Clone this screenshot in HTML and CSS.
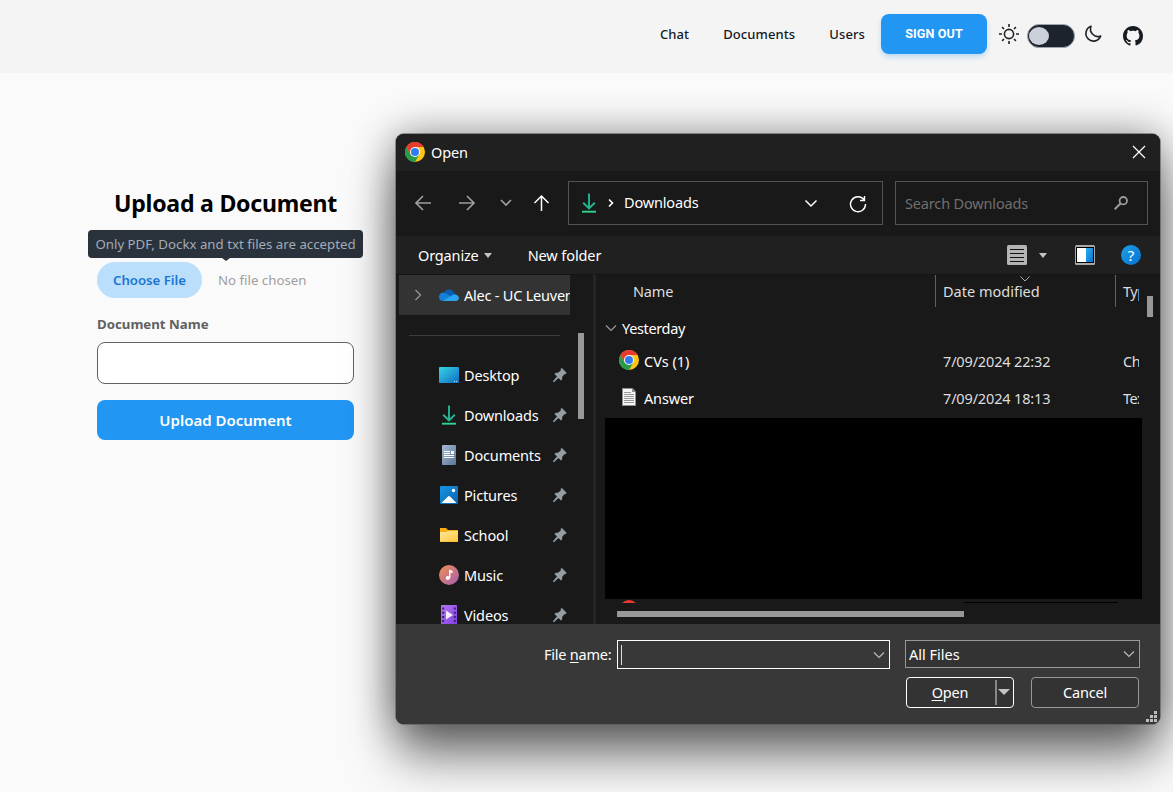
FILE: index.html
```html
<!DOCTYPE html>
<html lang="en">
<head>
<meta charset="utf-8">
<title>Upload a Document</title>
<link rel="stylesheet" href="styles.css">
</head>
<body>
<svg class="defs" aria-hidden="true">
  <defs>
    <linearGradient id="desk" x1="0" y1="0" x2="1" y2="1"><stop offset="0" stop-color="#36d6e4"/><stop offset="1" stop-color="#0f6cc4"/></linearGradient>
    <linearGradient id="doc" x1="0" y1="0" x2="1" y2="1"><stop offset="0" stop-color="#a6b8d0"/><stop offset="1" stop-color="#5b7898"/></linearGradient>
    <linearGradient id="pic" x1="0" y1="0" x2="1" y2="1"><stop offset="0" stop-color="#1796e0"/><stop offset="1" stop-color="#0a62b4"/></linearGradient>
    <linearGradient id="fold" x1="0" y1="0" x2="1" y2="1"><stop offset="0" stop-color="#ffe69c"/><stop offset="1" stop-color="#ffc83c"/></linearGradient>
    <linearGradient id="mus" x1="0" y1="0" x2="1" y2="1"><stop offset="0" stop-color="#f3904f"/><stop offset="1" stop-color="#a45cb4"/></linearGradient>
    <linearGradient id="vid" x1="0" y1="0" x2="1" y2="1"><stop offset="0" stop-color="#b678f0"/><stop offset="1" stop-color="#7d3fe0"/></linearGradient>
    <linearGradient id="blue" x1="0" y1="0" x2="1" y2="1"><stop offset="0" stop-color="#2cb0ee"/><stop offset="1" stop-color="#0674d0"/></linearGradient>
  </defs>
  <symbol id="chrome" viewBox="0 0 20 20">
    <circle cx="10" cy="10" r="10" fill="#ffc519"/>
    <path d="M10 10 5.7 12.5 1.34 5A10 10 0 0 0 10 20l4.3-7.5z" fill="#279a4b"/>
    <path d="M10 5h8.66A10 10 0 0 0 1.34 5L5.7 12.5 10 10z" fill="#e63b2e"/>
    <circle cx="10" cy="10" r="5" fill="#fff"/><circle cx="10" cy="10" r="4" fill="#2f7bf0"/>
  </symbol>
  <symbol id="pin" viewBox="0 0 14 14"><path d="M7.800.8 8.900.1 13.500 4.700 12.900 6l-1.500.3-2.100 2.500-.3 3L7.900 12.500 5.500 10.100 1.200 14 .1 14 .1 12.900 4 8.600 1.500 6.100 2.300 5l3.100-.4 2.300-2z" fill="#929da5"/></symbol>
  <symbol id="down" viewBox="0 0 16 20"><path d="M8 .5V15M2.200 9.800 8 15.500l5.800-5.700" fill="none" stroke="#22b795" stroke-width="1.900"/><path d="M1 18.700h14" stroke="#2fd58e" stroke-width="1.900"/></symbol>
  <symbol id="chev" viewBox="0 0 12 12"><path d="M1 3.500 6 8.500l5-5" fill="none" stroke="currentColor" stroke-width="1.200"/></symbol>
</svg>

<header class="topbar">
  <nav class="links"><a>Chat</a><a>Documents</a><a>Users</a></nav>
  <button class="signout">SIGN OUT</button>
  <svg class="sun" width="20" height="20" viewBox="0 0 20 20" fill="none" stroke="#1f2329" stroke-width="1.600"><circle cx="10" cy="10" r="4.600"/><path d="M10 0v3M10 17v3M0 10h3M17 10h3M3.100 3.100l1.900 1.900M15 15l1.900 1.900M3.100 16.900 5 15M15 5l1.900-1.900"/></svg>
  <span class="toggle"><span class="knob"></span></span>
  <svg class="moon" width="18" height="18" viewBox="0 0 18 18" fill="none" stroke="#1f2329" stroke-width="1.600"><path d="M7 1.300A7.600 7.600 0 1 0 16.700 11 7.500 7.500 0 0 1 7 1.300z" stroke-linejoin="round"/></svg>
  <svg class="github" width="20" height="20" viewBox="0 0 16 16" fill="#161b22"><path d="M8 0C3.580 0 0 3.580 0 8c0 3.540 2.290 6.530 5.470 7.590.4.070.55-.17.55-.38 0-.19-.01-.82-.01-1.490-2.010.37-2.530-.49-2.690-.94-.09-.23-.48-.94-.82-1.130-.28-.15-.68-.52-.01-.53.63-.01 1.080.58 1.230.82.72 1.210 1.870.87 2.330.66.070-.52.28-.87.51-1.070-1.780-.2-3.640-.89-3.640-3.950 0-.87.31-1.590.82-2.150-.08-.2-.36-1.020.08-2.120 0 0 .67-.21 2.200.82.640-.18 1.320-.27 2-.27s1.360.09 2 .27c1.530-1.040 2.200-.82 2.200-.82.44 1.100.16 1.920.08 2.120.51.56.82 1.270.82 2.150 0 3.070-1.870 3.750-3.650 3.950.29.25.54.73.54 1.480 0 1.070-.01 1.930-.01 2.200 0 .21.15.46.55.38A8.010 8.010 0 0 0 16 8c0-4.420-3.580-8-8-8z"/></svg>
</header>

<main class="upload">
  <h1>Upload a Document</h1>
  <div class="picker">
    <div class="tip">Only PDF, Dockx and txt files are accepted</div>
    <span class="choose">Choose File</span><span class="nofile">No file chosen</span>
  </div>
  <label class="label">Document Name</label>
  <div class="field"></div>
  <button class="submit">Upload Document</button>
</main>

<section class="dialog">
  <div class="titlebar">
    <svg width="20" height="20"><use href="#chrome"/></svg><span class="title">Open</span>
    <svg class="close" width="14" height="14" viewBox="0 0 14 14"><path d="M1 1l12 12M13 1 1 13" stroke="#fff" stroke-width="1.200"/></svg>
  </div>
  <div class="navbar">
    <div class="arrows">
      <svg width="18" height="18" viewBox="0 0 18 18" fill="none" stroke="#9d9d9d" stroke-width="1.700"><path d="M17 9H2M9 2 2 9l7 7"/></svg>
      <svg width="18" height="18" viewBox="0 0 18 18" fill="none" stroke="#9d9d9d" stroke-width="1.700"><path d="M1 9h15M9 2l7 7-7 7"/></svg>
      <svg width="14" height="14" viewBox="0 0 14 14" fill="none" stroke="#9d9d9d" stroke-width="1.700"><path d="M2 4 7 9l5-5"/></svg>
      <svg width="18" height="18" viewBox="0 0 18 18" fill="none" stroke="#fff" stroke-width="1.500"><path d="M8.500 17V2M1.500 9l7-7 7 7"/></svg>
    </div>
    <div class="path">
      <svg width="16" height="20"><use href="#down"/></svg>
      <svg class="crumb" width="6" height="10" viewBox="0 0 6 10"><path d="M1 1.500 4.500 5 1 8.500" fill="none" stroke="#fff" stroke-width="1.600"/></svg>
      <span>Downloads</span>
      <svg class="pathchev" width="14" height="14" viewBox="0 0 14 14"><path d="M1.500 4.500 7 10l5.500-5.500" fill="none" stroke="#fff" stroke-width="1.500"/></svg>
      <svg class="reload" width="18" height="18" viewBox="0 0 18 18" fill="none" stroke="#fff" stroke-width="1.400"><path d="M15.200 5A7.500 7.500 0 1 0 16.500 9M15.500 1v4.500H11"/></svg>
    </div>
    <div class="search"><span>Search Downloads</span>
      <svg width="14" height="14" viewBox="0 0 14 14" fill="none" stroke="#9b9b9b"><circle cx="9.300" cy="4.700" r="3.700" stroke-width="1.800"/><path d="M6.500 7.500.7 13.300" stroke-width="2"/></svg>
    </div>
  </div>
  <div class="toolbar">
    <span>Organize</span><i class="caret c1"></i><span class="newf">New folder</span>
    <div class="tools">
      <svg width="20" height="20" viewBox="0 0 20 20"><rect width="20" height="20" rx="1.500" fill="#b4b4b4"/><path d="M3 4.500h14M3 8.500h14M3 12.500h14M3 16.500h14" stroke="#111"/></svg>
      <i class="caret c2"></i>
      <svg class="pane" width="20" height="20" viewBox="0 0 20 20"><rect width="20" height="20" rx="1.500" fill="#aaa"/><path d="M1 2h18v16H1z" fill="#000"/><path d="M2 3h9v14H2z" fill="#fff"/><path d="M11 3h7v14h-7z" fill="url(#blue)"/></svg>
      <span class="help">?</span>
    </div>
  </div>
  <div class="body">
    <aside class="side">
      <div class="tree">
        <div class="account"><svg class="rchev" width="12" height="12"><use href="#chev"/></svg>
          <svg width="20" height="14" viewBox="0 0 20 14"><path d="M5 5A5.500 5.500 0 0 1 15 4.500 5 5 0 0 1 16 12H4A4 4 0 0 1 5 5z" fill="#0a5fb4"/><path d="M0 9a4.300 4.300 0 0 1 6-4l9 5-4 3H4a4 4 0 0 1-4-4z" fill="#1580d8"/><path d="M4 13 13.500 7A4.600 4.600 0 0 1 20 9.500 3.700 3.700 0 0 1 16 13z" fill="#29a5ef"/></svg>
          <span>Alec - UC Leuven</span></div>
        <div class="rule"></div>
        <div class="item"><b class="ico"><svg width="20" height="16" viewBox="0 0 20 16"><rect width="20" height="16" rx="1" fill="url(#desk)"/><path d="M15 14.500h1M17 14.500h1" stroke="#cfe8ff"/></svg></b><span>Desktop</span><svg class="pin"><use href="#pin"/></svg></div>
        <div class="item"><b class="ico"><svg width="16" height="20"><use href="#down"/></svg></b><span>Downloads</span><svg class="pin"><use href="#pin"/></svg></div>
        <div class="item"><b class="ico"><svg width="14" height="20" viewBox="0 0 14 20"><rect width="14" height="20" rx="1" fill="url(#doc)"/><path d="M2 6.500h6M2 8.500h6M2 10.500h10M2 12.500h10" stroke="#fff"/><path d="M9 6h3v3H9z" fill="#fff"/></svg></b><span>Documents</span><svg class="pin"><use href="#pin"/></svg></div>
        <div class="item"><b class="ico"><svg width="18" height="18" viewBox="0 0 18 18"><rect width="18" height="18" rx="1" fill="url(#pic)"/><path d="m1.500 17 6.500-6.500q1-1 2 0l6.500 6.500z" fill="#fff"/><circle cx="13.500" cy="4.500" r="1.700" fill="#fff"/></svg></b><span>Pictures</span><svg class="pin"><use href="#pin"/></svg></div>
        <div class="item"><b class="ico"><svg width="18" height="14" viewBox="0 0 18 14"><path d="M0 0h6l2 2h10v12H0z" fill="#f5ae14"/><path d="M0 4h6l2-1h10v10.500H0z" fill="url(#fold)"/></svg></b><span>School</span><svg class="pin"><use href="#pin"/></svg></div>
        <div class="item"><b class="ico"><svg width="20" height="20" viewBox="0 0 20 20"><circle cx="10" cy="10" r="10" fill="url(#mus)"/><circle cx="8.800" cy="13" r="2.100" fill="#fff"/><path d="M10 13V4.800l3.500 1v2.400L11.400 7.600V13z" fill="#fff"/></svg></b><span>Music</span><svg class="pin"><use href="#pin"/></svg></div>
        <div class="item"><b class="ico"><svg width="16" height="20" viewBox="0 0 16 20"><rect width="16" height="20" rx="1" fill="url(#vid)"/><path d="M2.200 2.500v16M13.800 2.500v16" stroke="#3b1f78" stroke-width="2" stroke-dasharray="2 2.200"/><path d="m5 5.500 7 4.500-7 4.500z" fill="#f2eefa"/></svg></b><span>Videos</span><svg class="pin"><use href="#pin"/></svg></div>
      </div>
      <div class="vbar"></div>
    </aside>
    <div class="files">
      <div class="list">
        <div class="row head"><span class="c-name">Name</span><span class="c-date">Date modified<svg class="sort" width="10" height="6" viewBox="0 0 10 6"><path d="M.5.500 5 5 9.500.500" fill="none" stroke="#aaa"/></svg></span><span class="c-type">Type</span></div>
        <div class="group"><svg width="12" height="12"><use href="#chev"/></svg><span>Yesterday</span></div>
        <div class="row r1"><span class="c-name"><b class="ico"><svg width="20" height="20"><use href="#chrome"/></svg></b>CVs (1)</span><span class="c-date">7/09/2024 22:32</span><span class="c-type">Chrome</span></div>
        <div class="row r2"><span class="c-name"><b class="ico"><svg width="14" height="18" viewBox="0 0 14 18"><path d="M0 0h10.500L14 3.500V18H0z" fill="#8e8e8e"/><path d="M1 1h9v3h3v13H1z" fill="#f6f6f6"/><path d="M2 4.500h7M2 6.500h10M2 8.500h10M2 10.500h10M2 12.500h10M2 14.500h10" stroke="#999"/></svg></b>Answer</span><span class="c-date">7/09/2024 18:13</span><span class="c-type">Text</span></div>
      </div>
      <div class="redacted"></div>
      <div class="peek"><svg width="14" height="3" viewBox="0 0 14 3"><path d="M0 3Q7-3 14 3z" fill="#e63b2e"/></svg><i></i></div>
      <div class="hbar"></div>
      <div class="vthumb"></div>
    </div>
  </div>
  <footer class="foot">
    <div class="line1"><span class="fname">File <u>n</u>ame:</span>
      <div class="combo"><i class="cursor"></i><svg width="12" height="12"><use href="#chev"/></svg></div>
      <div class="select"><span>All Files</span><svg width="12" height="12"><use href="#chev"/></svg></div></div>
    <div class="line2"><div class="btn open"><span><u>O</u>pen</span><em><i class="caret big"></i></em></div><div class="btn">Cancel</div></div>
    <svg class="grip" width="11" height="11" viewBox="0 0 11 11" fill="#bdbdbd"><path d="M8 0h3v3H8zM4 4h3v3H4zM8 4h3v3H8zM0 8h3v3H0zM4 8h3v3H4zM8 8h3v3H8z"/></svg>
  </footer>
</section>
</body>
</html>
```
FILE: styles.css
```css
* { box-sizing: border-box; }
html, body { margin: 0; height: 792px; overflow: hidden; }
body { background: #fafafa; font-family: "Noto Sans", "Open Sans", sans-serif; position: relative; }
svg { display: block; flex: none; }
.defs { position: absolute; width: 0; height: 0; }
button { border: 0; padding: 0; }

.topbar { height: 73px; background: #f4f4f4; display: flex; justify-content: flex-end; padding: 14px 30px 0 0; }
.links { display: flex; gap: 34px; padding-right: 16px; height: 40px; align-items: center; font-size: 13px; font-weight: 500; color: #15181e; letter-spacing: .1px; white-space: nowrap; }
.signout { width: 106px; height: 40px; border-radius: 8px; background: #2196f3; color: #fff; font: bold 12.600px Roboto, sans-serif; letter-spacing: .1px; padding-bottom: 1px; box-shadow: 0 4px 6px -1px rgba(33, 150, 243, .2), 0 2px 4px rgba(33, 150, 243, .1); }
.sun { margin: 10px 0 0 12px; }
.toggle { width: 48px; height: 24px; margin: 10px 0 0 8px; border-radius: 12px; background: #1d232a; border: 1px solid #9ca3af; padding: 2px 1px; }
.knob { display: block; width: 20px; height: 18px; border-radius: 50%; background: #ccd0da; }
.moon { margin: 11px 0 0 9px; }
.github { margin: 12px 0 0 21px; }

.upload { width: 257px; margin: 113px 0 0 97px; display: flex; flex-direction: column; }
h1 { margin: 0; height: 36px; line-height: 35px; font-size: 23.100px; font-weight: 700; letter-spacing: -.25px; text-align: center; white-space: nowrap; color: #000; }
.picker { position: relative; margin-top: 40px; height: 36px; display: flex; align-items: center; }
.tip { position: absolute; left: -9px; top: -32px; width: 275px; height: 28px; border-radius: 4px; background: #2a323c; color: #a3abb8; font-size: 13.250px; line-height: 28px; text-align: center; white-space: nowrap; }
.tip::after { content: ""; position: absolute; left: 134px; top: 28px; border: 4px solid transparent; border-top: 3px solid #2a323c; border-bottom: 0; }
.choose { width: 105px; height: 36px; border-radius: 18px; background: #bbdefb; color: #1976d2; font-size: 13.200px; font-weight: 600; line-height: 36px; text-align: center; }
.nofile { margin-left: 16px; color: #9e9e9e; font-size: 13.250px; }
.label { margin-top: 16px; height: 20px; line-height: 20px; font-size: 13.250px; font-weight: 700; color: #616161; }
.field { margin-top: 8px; height: 42px; border: 1px solid #616161; border-radius: 8px; background: #fff; }
.submit { margin-top: 16px; height: 40px; border-radius: 8px; background: #2196f3; color: #fff; font: 600 15px "Noto Sans", sans-serif; }

.dialog { position: absolute; left: 396px; top: 134px; width: 764px; height: 590px; border-radius: 8px; background: #191919; color: #fff; font-size: 14.500px; letter-spacing: -.16px; white-space: nowrap; box-shadow: 0 0 0 1px rgba(90, 90, 90, .6), 0 0 40px rgba(0, 0, 0, .42), 0 34px 50px -2px rgba(0, 0, 0, .52); }
.titlebar { height: 37px; background: #202020; border-radius: 8px 8px 0 0; display: flex; align-items: center; padding: 0 14px 1px 9px; }
.title { margin-left: 6px; }
.close { margin-left: auto; }
.navbar { height: 65px; display: flex; padding: 10px 12px 0 18px; }
.arrows { width: 154px; height: 44px; display: grid; grid-template-columns: 44px 41px 34px 35px; align-items: center; }
.path { width: 315px; height: 44px; border: 1px solid #535353; display: flex; align-items: center; padding: 0 15px 0 12px; }
.path span { padding-bottom: 2px; }
.crumb { margin: 0 10px 0 11px; }
.pathchev { margin-left: auto; }
.reload { margin: 2px 0 0 31px; }
.search { width: 253px; height: 44px; margin-left: 12px; border: 1px solid #535353; display: flex; align-items: center; justify-content: space-between; padding: 0 19px 0 9px; color: #6f6f6f; }
.toolbar { height: 38px; background: #202020; display: flex; align-items: center; padding: 0 19px 0 22px; }
.caret { width: 0; height: 0; border: 4px solid transparent; border-top: 5px solid #c4c4c4; border-bottom: 0; }
.c1 { margin-left: 5px; }
.newf { margin-left: 36px; letter-spacing: -.1px; }
.tools { margin-left: auto; display: flex; align-items: center; }
.c2 { margin-left: 12px; }
.pane { margin-left: 28px; }
.help { margin-left: 26px; width: 20px; height: 20px; border-radius: 50%; background: linear-gradient(135deg, #1ea0e8, #0672d2); font-size: 15px; line-height: 20px; text-align: center; }

.body { height: 350px; display: flex; }
.side { width: 197px; display: flex; border-top: 1px solid #141414; }
.tree { width: 174px; padding-left: 3px; height: 349px; overflow: hidden; }
.account { height: 40px; background: #333; display: flex; align-items: center; padding-left: 13px; overflow: hidden; }
.account span { margin-left: 5px; letter-spacing: -.22px; }
.rchev { transform: rotate(-90deg); margin-right: 15px; color: #999; }
.rule { height: 1px; margin: 20px 10px 19px; background: #3c3c3c; }
.item { height: 40px; display: flex; align-items: center; padding: 0 3px 0 40px; }
.ico { width: 20px; height: 20px; display: flex; justify-content: center; align-items: center; margin-right: 5px; flex: none; }
.pin { width: 14px; height: 14px; margin-left: auto; }
.vbar { width: 6px; height: 86px; margin: 58px 0 0 8px; background: #989898; }
.files { flex: 1; border-left: 3px solid #252525; position: relative; border-top: 1px solid #141414; }
.list { width: 543px; height: 143px; overflow: hidden; }
.row { display: grid; grid-template-columns: 339px 180px 60px; height: 37px; align-items: center; color: #dedede; }
.row > span { height: 100%; display: flex; align-items: center; }
.head { height: 32px; }
.head .c-name { padding-left: 37px; }
.head .c-date, .head .c-type { border-left: 1px solid #616161; position: relative; padding-left: 7px; }
.head .c-date { letter-spacing: 0; }
.c-name { padding-left: 23px; }
.c-date, .c-type { padding-left: 8px; }
.c-type { letter-spacing: -.5px; }
.r1 .c-name, .r2 .c-name { color: #fff; }
.r1 .c-name { letter-spacing: 0; }
.row .ico { margin-top: -1px; }
.sort { position: absolute; left: 84px; top: 1px; }
.group { height: 35px; display: flex; align-items: center; padding: 6px 0 0 9px; gap: 5px; letter-spacing: -.35px; }
.group svg { color: #9a9a9a; }
.redacted { margin-left: 9px; width: 537px; height: 181px; background: #000; }
.peek { height: 5px; display: flex; padding: 0 0 1px 26px; align-items: flex-end; }
.peek i { width: 154px; height: 1px; margin-left: 328px; background: #000; }
.hbar { width: 347px; height: 6px; margin: 7px 0 0 21px; background: #989898; }
.vthumb { position: absolute; left: 551px; top: 21px; width: 6px; height: 21px; background: #989898; }

.foot { height: 100px; background: #383838; border-radius: 0 0 8px 8px; padding-top: 16px; position: relative; }
.line1 { display: flex; padding-left: 148px; height: 37px; }
.fname { width: 73px; line-height: 28px; letter-spacing: -.22px; }
u { text-underline-offset: 2px; text-decoration-thickness: 1px; }
.combo { width: 273px; height: 29px; border: 1px solid #fff; display: flex; align-items: center; justify-content: space-between; padding: 0 4px 0 3px; color: #bbb; }
.cursor { width: 1px; height: 20px; background: #ddd; }
.select { width: 235px; height: 28px; margin-left: 15px; background: #333; border: 1px solid #999; display: flex; align-items: center; justify-content: space-between; padding: 0 4px 0 3px; letter-spacing: 0; }
.select svg { color: #bbb; }
.line2 { display: flex; gap: 17px; padding-left: 510px; }
.btn { width: 108px; height: 31px; border: 1px solid #999; border-radius: 4px; background: #333; text-align: center; line-height: 29px; }
.open { border-color: #fff; display: flex; align-items: center; }
.open span { width: 88px; padding-right: 2px; }
.open em { height: 25px; border-left: 2px solid #888; padding: 9px 0 0 1px; }
.big { display: block; border-width: 6px 6px 0; }
.grip { position: absolute; right: 3px; bottom: 2px; }
```
